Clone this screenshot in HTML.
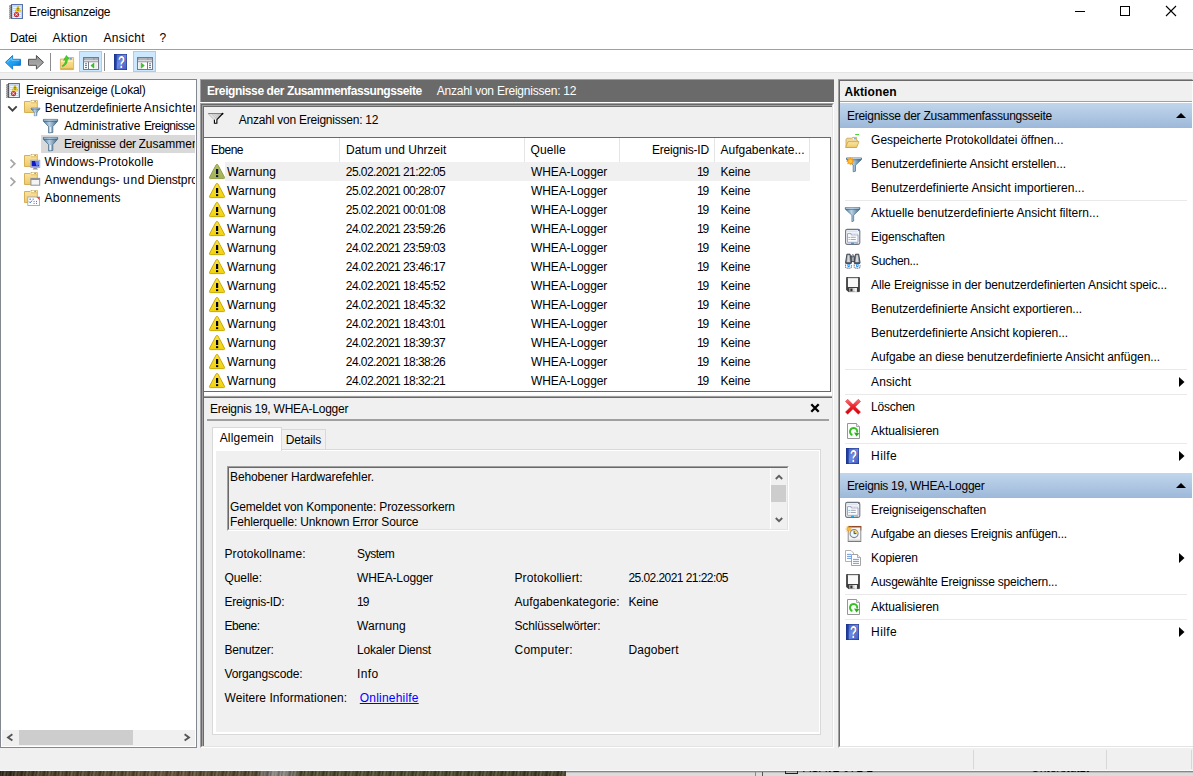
<!DOCTYPE html>
<html lang="de"><head><meta charset="utf-8"><title>Ereignisanzeige</title>
<style>
html,body{margin:0;padding:0;background:#f0f0f0;}
body{width:1193px;height:776px;overflow:hidden;position:relative;font-family:"Liberation Sans",sans-serif;font-size:12px;color:#000;}
#app{position:absolute;left:0;top:0;width:1193px;height:776px;overflow:hidden;}
#app>div,#app>svg,#app>span{position:absolute;box-sizing:border-box;}
.t{white-space:pre;line-height:16px;height:16px;}

</style></head>
<body>
<div id="app">
<svg width="0" height="0" style="left:0;top:0"><defs><linearGradient id="gfold" x1="0" y1="0" x2="0" y2="1"><stop offset="0" stop-color="#fbe6a3"/><stop offset="1" stop-color="#efc968"/></linearGradient><linearGradient id="gfun" x1="0" y1="0" x2="1" y2="0"><stop offset="0" stop-color="#4f7c9f"/><stop offset=".42" stop-color="#b9d2e4"/><stop offset="1" stop-color="#3f6788"/></linearGradient><linearGradient id="gwarn" x1="0" y1="0" x2="0" y2="1"><stop offset="0" stop-color="#f6e048"/><stop offset="1" stop-color="#f2d20c"/></linearGradient><linearGradient id="gwarns" x1="0" y1="0" x2="0" y2="1"><stop offset="0" stop-color="#b4c06c"/><stop offset="1" stop-color="#a3b052"/></linearGradient><linearGradient id="ghelp" x1="0" y1="0" x2="1" y2="1"><stop offset="0" stop-color="#3355c8"/><stop offset=".5" stop-color="#6d8ae2"/><stop offset="1" stop-color="#3a58c0"/></linearGradient><linearGradient id="gback" x1="0" y1="0" x2="1" y2="1"><stop offset="0" stop-color="#3fb4f4"/><stop offset=".6" stop-color="#1a9bee"/><stop offset="1" stop-color="#0660c0"/></linearGradient><linearGradient id="gfwd" x1="0" y1="0" x2="0" y2="1"><stop offset="0" stop-color="#8a8a8a"/><stop offset="1" stop-color="#b8b8b8"/></linearGradient><linearGradient id="gred" x1="0" y1="0" x2="0" y2="1"><stop offset="0" stop-color="#f47478"/><stop offset=".5" stop-color="#ee2028"/><stop offset="1" stop-color="#cc0008"/></linearGradient></defs></svg>
<div style="left:0px;top:0px;width:1193px;height:49px;background:#fff"></div>
<div style="left:0px;top:49px;width:1193px;height:1px;background:#a0a0a0"></div>
<div style="left:0px;top:50px;width:1193px;height:22px;background:#fff"></div>
<div style="left:0px;top:72px;width:1193px;height:1px;background:#e4e4e4"></div>
<div style="left:0px;top:771px;width:566px;height:5px;background:repeating-linear-gradient(100deg,rgba(0,0,0,.28) 0,rgba(255,240,200,.12) 2px,rgba(0,0,0,.18) 3px,rgba(255,240,200,.2) 5px,rgba(0,0,0,.05) 7px,rgba(255,240,200,.1) 8px,rgba(0,0,0,.28) 11px),linear-gradient(90deg,#2a2418 0,#4a3e28 7%,#5e4e34 30%,#51472f 45%,#6f6d66 46.8%,#908f8b 49%,#77766f 51.5%,#4b4a2e 53%,#46472b 80%,#3f3d28 100%)"></div>
<div style="left:566px;top:771px;width:627px;height:5px;background:#dcdcdc"></div>
<div style="left:566px;top:771px;width:627px;height:2px;background:linear-gradient(#6a6a6a,#dcdcdc)"></div>
<div style="left:755px;top:772px;width:1px;height:4px;background:#8a8a8a"></div>
<div style="left:762px;top:772px;width:1px;height:4px;background:#555"></div>
<div style="left:785px;top:771px;width:13px;height:3px;border:1px solid #222;border-top:none"></div>
<div style="left:800px;top:771px;width:100px;height:3px;overflow:hidden"><span style="position:absolute;left:3px;top:-10px;white-space:pre;line-height:14px">ASAv2 071 1</span></div>
<div style="left:1025px;top:771px;width:100px;height:3px;overflow:hidden"><span style="position:absolute;left:6px;top:-10px;white-space:pre;line-height:14px">Unterstützt</span></div>
<div style="left:0px;top:770px;width:1193px;height:1px;background:#fafafa"></div>
<svg style="left:8px;top:4px;overflow:visible" width="16" height="16" viewBox="0 0 16 16"><rect x="3.5" y="0.5" width="11" height="14" fill="#c6daf2" stroke="#5a72ac"/><path d="M5 3.5H13M5 5.5H13M5 7.5H13M5 9.5H13M5 11.5H13M5 13.5H13" stroke="#f4f8fd" stroke-width="0.9"/><path d="M1.2 2.3L4 1.6M1.2 4.3L4 3.6M1.2 6.3L4 5.6M1.2 8.3L4 7.6M1.2 10.3L4 9.6M1.2 12.3L4 11.6M1.2 14.2L4 13.5" stroke="#4c4c4c" stroke-width="1.15"/><path d="M10 2L12.9 7.3H7.1Z" fill="#f2d21a" stroke="#d6b000" stroke-width="0.6" stroke-linejoin="round"/><path d="M10 3.8V5.6M10 6.2V6.9" stroke="#3a3000" stroke-width="0.9"/><circle cx="8.5" cy="10.6" r="2.6" fill="#cc262c"/><circle cx="8.1" cy="10" r="1.5" fill="#e0565a"/><path d="M7.5 9.6L9.5 11.6M9.5 9.6L7.5 11.6" stroke="#fff" stroke-width=".9"/></svg>
<div style="left:1075px;top:11px;width:10px;height:1px;background:#000"></div>
<div style="left:1120px;top:6px;width:10px;height:10px;border:1px solid #000"></div>
<svg style="left:1165px;top:5px" width="12" height="12" viewBox="0 0 12 12"><path d="M1 1L11 11M11 1L1 11" stroke="#000" stroke-width="1.1" fill="none"/></svg>
<svg style="left:5px;top:54px;overflow:visible" width="16" height="16" viewBox="0 0 16 16"><path d="M0.5 8.3L7.6 1.5V5.3H15.5V11.3H7.6V15.1Z" fill="url(#gback)" stroke="#1a7ed2" stroke-width="1" stroke-linejoin="round"/><path d="M2.2 8.2L6.8 3.8V6.3H14.4" stroke="#8ad6ff" stroke-width=".9" fill="none" opacity=".85"/></svg>
<svg style="left:28px;top:54px;overflow:visible" width="16" height="16" viewBox="0 0 16 16"><path d="M15.5 8.3L8.4 1.5V5.3H0.5V11.3H8.4V15.1Z" fill="url(#gfwd)" stroke="#505050" stroke-width="1" stroke-linejoin="round"/><path d="M1.6 6.4H9.2V4" stroke="#a8a8a8" stroke-width=".8" fill="none" opacity=".7"/></svg>
<div style="left:50px;top:53px;width:1px;height:18px;background:#8d8d8d"></div>
<svg style="left:59px;top:54px;overflow:visible" width="16" height="16" viewBox="0 0 16 16"><path d="M1.4 5H5.2L6.4 3.5H14.6V15.6H1.4Z" fill="url(#gfold)" stroke="#d3ad55" stroke-width=".8"/><rect x="10.3" y="4.3" width="2.8" height="1.3" rx=".6" fill="#4a8be0"/><rect x="9.4" y="4.2" width="1" height="1.4" fill="#fff"/><path d="M2 7.2H14" stroke="#fdf3d0" stroke-width="1.2"/><path d="M2 14.9H14" stroke="#c79a3c" stroke-width=".8"/><path d="M3 11.8C5.2 10.8 6.4 8.8 6.6 5.8L4.6 6.4 7.4 1.4 10.2 5 8.4 5.2C8.6 9 6.6 11.6 3.6 12.6Z" fill="#44d030" stroke="#2aa51c" stroke-width="0.5"/></svg>
<div style="left:79px;top:51px;width:23px;height:21px;background:#cce8ff;border:1px solid #99d1ff"></div>
<svg style="left:83px;top:57px;overflow:visible" width="16" height="13" viewBox="0 0 16 13"><rect x="0.5" y="0.5" width="15" height="12" fill="#fff" stroke="#767a86"/><rect x="1" y="1" width="14" height="2" fill="#8c909c"/><path d="M1.5 2H10.5" stroke="#e8e8ee" stroke-width=".8"/><rect x="11.6" y="1.5" width="1" height="1" fill="#fff"/><rect x="13.5" y="1.5" width="1" height="1" fill="#fff"/><path d="M1 3.8H15" stroke="#c9ccd4" stroke-width="1"/><path d="M1 4.8H15" stroke="#767a86" stroke-width=".8"/><rect x="5" y="4.8" width="1" height="7.5" fill="#767a86"/><path d="M2 6.8H4M2 8.6H4M2 10.6H4" stroke="#3b79c8" stroke-width="1"/><rect x="12.2" y="5.6" width="2.3" height="6.4" fill="#ececec"/><path d="M11 6L7.8 8.6 11 11.2Z" fill="#3cc42a" stroke="#2aa41c" stroke-width=".5"/></svg>
<div style="left:104px;top:53px;width:1px;height:18px;background:#8d8d8d"></div>
<svg style="left:114px;top:54px;overflow:visible" width="13" height="16" viewBox="0 0 13 16"><rect x="0" y="0" width="13" height="16" fill="url(#ghelp)"/><rect x="0" y="0" width="2.7" height="16" fill="#21409e"/><rect x="0.25" y="0.25" width="12.5" height="15.5" fill="none" stroke="#1a2c84" stroke-width=".5"/><text transform="translate(8,14.2) scale(.72,1)" font-family="Liberation Sans,sans-serif" font-size="16" font-weight="700" fill="#1a2a78" text-anchor="middle">?</text><text transform="translate(7.4,13.7) scale(.72,1)" font-family="Liberation Sans,sans-serif" font-size="16" font-weight="700" fill="#fff" text-anchor="middle">?</text></svg>
<div style="left:133px;top:51px;width:23px;height:21px;background:#cce8ff;border:1px solid #99d1ff"></div>
<svg style="left:137px;top:57px;overflow:visible" width="16" height="13" viewBox="0 0 16 13"><rect x="0.5" y="0.5" width="15" height="12" fill="#fff" stroke="#767a86"/><rect x="1" y="1" width="14" height="2" fill="#8c909c"/><path d="M1.5 2H10.5" stroke="#e8e8ee" stroke-width=".8"/><rect x="11.6" y="1.5" width="1" height="1" fill="#fff"/><rect x="13.5" y="1.5" width="1" height="1" fill="#fff"/><path d="M1 3.8H15" stroke="#c9ccd4" stroke-width="1"/><path d="M1 4.8H15" stroke="#767a86" stroke-width=".8"/><rect x="10" y="4.8" width="1" height="7.5" fill="#767a86"/><path d="M12 6.8H14M12 8.6H14M12 10.6H14" stroke="#3b79c8" stroke-width="1"/><rect x="1.4" y="5.6" width="2.3" height="6.4" fill="#ececec"/><path d="M4.2 6L7.4 8.6 4.2 11.2Z" fill="#3cc42a" stroke="#2aa41c" stroke-width=".5"/></svg>
<div style="left:0px;top:79px;width:197px;height:669px;background:#fff;border:1px solid #828790"></div>
<div style="left:41px;top:135px;width:154px;height:18px;background:#d9d9d9"></div>
<svg style="left:5px;top:83px;overflow:visible" width="16" height="16" viewBox="0 0 16 16"><rect x="3.5" y="0.5" width="11" height="14" fill="#c6daf2" stroke="#5a72ac"/><path d="M5 3.5H13M5 5.5H13M5 7.5H13M5 9.5H13M5 11.5H13M5 13.5H13" stroke="#f4f8fd" stroke-width="0.9"/><path d="M1.2 2.3L4 1.6M1.2 4.3L4 3.6M1.2 6.3L4 5.6M1.2 8.3L4 7.6M1.2 10.3L4 9.6M1.2 12.3L4 11.6M1.2 14.2L4 13.5" stroke="#4c4c4c" stroke-width="1.15"/><path d="M10 2L12.9 7.3H7.1Z" fill="#f2d21a" stroke="#d6b000" stroke-width="0.6" stroke-linejoin="round"/><path d="M10 3.8V5.6M10 6.2V6.9" stroke="#3a3000" stroke-width="0.9"/><circle cx="8.5" cy="10.6" r="2.6" fill="#cc262c"/><circle cx="8.1" cy="10" r="1.5" fill="#e0565a"/><path d="M7.5 9.6L9.5 11.6M9.5 9.6L7.5 11.6" stroke="#fff" stroke-width=".9"/></svg>
<svg style="left:7px;top:103px;overflow:visible" width="16" height="16" viewBox="0 0 16 16"><path d="M1.3 3.4L5.5 7.6L9.7 3.4" stroke="#404040" stroke-width="1.9" fill="none"/></svg>
<svg style="left:24px;top:99px;overflow:visible" width="16" height="16" viewBox="0 0 16 16"><path d="M0.5 2.5H6L7 1.5H13.3V13.5H0.5Z" fill="url(#gfold)" stroke="#d5b057" stroke-width="1"/><rect x="8" y="1.6" width="4.6" height="1.6" fill="#fff"/><rect x="10.2" y="1.7" width="2" height="1.1" rx=".5" fill="#4a8be0"/><path d="M7 3.8H13" stroke="#d9b55e" stroke-width=".8"/><g transform="translate(6.75,8.2) scale(0.63,0.58)"><path d="M0.4 1.4H14.6V3.2L9.8 8.6V14.5L5.6 14.9V8.6L0.4 3.2Z" fill="url(#gfun)" stroke="#456a8a" stroke-width=".8" stroke-linejoin="round"/><path d="M1 2.2H14" stroke="#c5d9e8" stroke-width=".9"/><path d="M0.8 3.3H14.2" stroke="#3f6383" stroke-width=".8"/><path d="M7.4 9V14.2" stroke="#e6f0f7" stroke-width="1.3"/></g></svg>
<svg style="left:43px;top:118px;overflow:visible" width="16" height="16" viewBox="0 0 16 16"><g transform="translate(0,0) scale(1,1)"><path d="M0.4 1.4H14.6V3.2L9.8 8.6V14.5L5.6 14.9V8.6L0.4 3.2Z" fill="url(#gfun)" stroke="#456a8a" stroke-width=".8" stroke-linejoin="round"/><path d="M1 2.2H14" stroke="#c5d9e8" stroke-width=".9"/><path d="M0.8 3.3H14.2" stroke="#3f6383" stroke-width=".8"/><path d="M7.4 9V14.2" stroke="#e6f0f7" stroke-width="1.3"/></g></svg>
<svg style="left:43px;top:136px;overflow:visible" width="16" height="16" viewBox="0 0 16 16"><g transform="translate(0,0) scale(1,1)"><path d="M0.4 1.4H14.6V3.2L9.8 8.6V14.5L5.6 14.9V8.6L0.4 3.2Z" fill="url(#gfun)" stroke="#456a8a" stroke-width=".8" stroke-linejoin="round"/><path d="M1 2.2H14" stroke="#c5d9e8" stroke-width=".9"/><path d="M0.8 3.3H14.2" stroke="#3f6383" stroke-width=".8"/><path d="M7.4 9V14.2" stroke="#e6f0f7" stroke-width="1.3"/></g></svg>
<svg style="left:7px;top:156px;overflow:visible" width="16" height="16" viewBox="0 0 16 16"><path d="M3.5 3.6L7.8 7.8L3.5 12" stroke="#a6a6a6" stroke-width="1.7" fill="none"/></svg>
<svg style="left:24px;top:153px;overflow:visible" width="16" height="16" viewBox="0 0 16 16"><path d="M0.5 2.5H6L7 1.5H13.3V13.5H0.5Z" fill="url(#gfold)" stroke="#d5b057" stroke-width="1"/><rect x="8" y="1.6" width="4.6" height="1.6" fill="#fff"/><rect x="10.2" y="1.7" width="2" height="1.1" rx=".5" fill="#4a8be0"/><path d="M7 3.8H13" stroke="#d9b55e" stroke-width=".8"/><rect x="6.8" y="7.2" width="9" height="7.2" fill="#d8dde6" stroke="#9aa0aa" stroke-width=".8"/><rect x="7.6" y="8" width="7.4" height="5.4" fill="#1018c8"/><path d="M11 8H15V11.8L12.6 13.4Z" fill="#6a86ee"/><path d="M8.6 16.4L9.8 14.8H12.8L14 16.4Z" fill="#8a8f98"/></svg>
<svg style="left:7px;top:174px;overflow:visible" width="16" height="16" viewBox="0 0 16 16"><path d="M3.5 3.6L7.8 7.8L3.5 12" stroke="#a6a6a6" stroke-width="1.7" fill="none"/></svg>
<svg style="left:24px;top:171px;overflow:visible" width="16" height="16" viewBox="0 0 16 16"><path d="M0.5 2.5H6L7 1.5H13.3V13.5H0.5Z" fill="url(#gfold)" stroke="#d5b057" stroke-width="1"/><rect x="8" y="1.6" width="4.6" height="1.6" fill="#fff"/><rect x="10.2" y="1.7" width="2" height="1.1" rx=".5" fill="#4a8be0"/><path d="M7 3.8H13" stroke="#d9b55e" stroke-width=".8"/><rect x="6.9" y="7.4" width="8.8" height="6.8" fill="#f4f4f4" stroke="#8d9098" stroke-width="1"/><rect x="6.9" y="7.4" width="8.8" height="1.6" fill="#8d9098"/></svg>
<svg style="left:24px;top:189px;overflow:visible" width="16" height="16" viewBox="0 0 16 16"><path d="M0.5 2.5H6L7 1.5H13.3V13.5H0.5Z" fill="url(#gfold)" stroke="#d5b057" stroke-width="1"/><rect x="8" y="1.6" width="4.6" height="1.6" fill="#fff"/><rect x="10.2" y="1.7" width="2" height="1.1" rx=".5" fill="#4a8be0"/><path d="M7 3.8H13" stroke="#d9b55e" stroke-width=".8"/><rect x="3.8" y="8" width="11.8" height="8.4" fill="#fff" stroke="#9a9da6" stroke-width=".8"/><path d="M12.4 8H15.6V11.2Z" fill="#f04a4a"/><path d="M5.4 10.2H7M8.6 10.2H9.8M5.2 12.6L6.2 13.8 8 11.6M9.6 12.4H10.6M12 12.4H13M9.6 14.4H10.6M12 14.4H13" stroke="#2a62c8" stroke-width=".9" fill="none"/></svg>
<div style="left:2px;top:730px;width:193px;height:16px;background:#f0f0f0"></div>
<div style="left:19px;top:730px;width:114px;height:15px;background:#cdcdcd"></div>
<svg style="left:6px;top:733px" width="8" height="9" viewBox="0 0 8 9"><path d="M6.4 1.2L2 4.4L6.4 7.6" stroke="#555" stroke-width="1.9" fill="none"/></svg>
<svg style="left:183px;top:733px" width="8" height="9" viewBox="0 0 8 9"><path d="M1.6 1.2L6 4.4L1.6 7.6" stroke="#555" stroke-width="1.9" fill="none"/></svg>
<div style="left:200px;top:79px;width:634px;height:23px;background:#6a6a6a;border-top:1px solid #a0a0a0;border-left:1px solid #a0a0a0"></div>
<div style="left:200px;top:102px;width:634px;height:1px;background:#fff"></div>
<div style="left:200px;top:103px;width:634px;height:645px;background:#f0f0f0;border-left:1px solid #a0a0a0;border-top:1px solid #a0a0a0;border-right:1px solid #fff;border-bottom:1px solid #fff"></div>
<div style="left:201px;top:104px;width:632px;height:643px;border-left:1px solid #696969;border-top:1px solid #696969;border-right:1px solid #e3e3e3;border-bottom:1px solid #e3e3e3"></div>
<div style="left:202px;top:105px;width:630px;height:641px;border-left:1px solid #a0a0a0;border-top:1px solid #a0a0a0"></div>
<div style="left:203px;top:106px;width:629px;height:640px;border-left:1px solid #696969;border-top:1px solid #696969"></div>
<svg style="left:208px;top:112px;overflow:visible" width="16" height="13" viewBox="0 0 16 13"><path d="M1.4 1.8L6.6 7.4H8.8L14 1.8Z" fill="#c4c4c4"/><path d="M3.4 2.4L7.2 6.6M5.4 2.2L8.2 5.4M7.6 2.2L9.6 4.4" stroke="#ececec" stroke-width=".7"/><path d="M0.2 1.5H14.4" stroke="#808080" stroke-width="1"/><path d="M0.4 1.7L6.3 7.7" stroke="#8c8c8c" stroke-width=".9"/><path d="M1.6 2.1L6.9 7.4" stroke="#fff" stroke-width=".8"/><rect x="6.9" y="7.6" width="1.5" height="3.3" fill="#fff"/><path d="M14.7 1.5L8.9 7.7V11.3H6.4V7.7" stroke="#000" stroke-width="1.1" fill="none"/><circle cx="14.6" cy="1.6" r=".9" fill="#000"/></svg>
<div style="left:204px;top:137px;width:627px;height:255px;background:#fff;border-bottom:1px solid #696969;border-right:1px solid #696969"></div>
<div style="left:204px;top:137px;width:627px;height:1px;background:#696969"></div>
<div style="left:225px;top:162px;width:585px;height:19px;background:#f0f0f0"></div>
<div style="left:339px;top:138px;width:1px;height:24px;background:#e5e5e5"></div>
<div style="left:524px;top:138px;width:1px;height:24px;background:#e5e5e5"></div>
<div style="left:619px;top:138px;width:1px;height:24px;background:#e5e5e5"></div>
<div style="left:714px;top:138px;width:1px;height:24px;background:#e5e5e5"></div>
<div style="left:809px;top:138px;width:1px;height:24px;background:#e5e5e5"></div>
<svg style="left:209px;top:164px;overflow:visible" width="16" height="16" viewBox="0 0 16 16"><path d="M8 0.3Q8.6 0.3 9 1.1L15.5 13.3Q15.9 14.5 14.8 14.6H1.2Q0.1 14.5 0.5 13.3L7 1.1Q7.4 0.3 8 0.3Z" fill="url(#gwarns)" stroke="#94a046" stroke-width="1"/><path d="M7 5H9.2V10H7Z" fill="#00103c"/><rect x="7" y="11.2" width="2.2" height="1.9" fill="#00103c"/></svg>
<svg style="left:209px;top:183px;overflow:visible" width="16" height="16" viewBox="0 0 16 16"><path d="M8 0.3Q8.6 0.3 9 1.1L15.5 13.3Q15.9 14.5 14.8 14.6H1.2Q0.1 14.5 0.5 13.3L7 1.1Q7.4 0.3 8 0.3Z" fill="url(#gwarn)" stroke="#c9aa00" stroke-width="1"/><path d="M7 5H9.2V10H7Z" fill="#000"/><rect x="7" y="11.2" width="2.2" height="1.9" fill="#000"/></svg>
<svg style="left:209px;top:202px;overflow:visible" width="16" height="16" viewBox="0 0 16 16"><path d="M8 0.3Q8.6 0.3 9 1.1L15.5 13.3Q15.9 14.5 14.8 14.6H1.2Q0.1 14.5 0.5 13.3L7 1.1Q7.4 0.3 8 0.3Z" fill="url(#gwarn)" stroke="#c9aa00" stroke-width="1"/><path d="M7 5H9.2V10H7Z" fill="#000"/><rect x="7" y="11.2" width="2.2" height="1.9" fill="#000"/></svg>
<svg style="left:209px;top:221px;overflow:visible" width="16" height="16" viewBox="0 0 16 16"><path d="M8 0.3Q8.6 0.3 9 1.1L15.5 13.3Q15.9 14.5 14.8 14.6H1.2Q0.1 14.5 0.5 13.3L7 1.1Q7.4 0.3 8 0.3Z" fill="url(#gwarn)" stroke="#c9aa00" stroke-width="1"/><path d="M7 5H9.2V10H7Z" fill="#000"/><rect x="7" y="11.2" width="2.2" height="1.9" fill="#000"/></svg>
<svg style="left:209px;top:240px;overflow:visible" width="16" height="16" viewBox="0 0 16 16"><path d="M8 0.3Q8.6 0.3 9 1.1L15.5 13.3Q15.9 14.5 14.8 14.6H1.2Q0.1 14.5 0.5 13.3L7 1.1Q7.4 0.3 8 0.3Z" fill="url(#gwarn)" stroke="#c9aa00" stroke-width="1"/><path d="M7 5H9.2V10H7Z" fill="#000"/><rect x="7" y="11.2" width="2.2" height="1.9" fill="#000"/></svg>
<svg style="left:209px;top:259px;overflow:visible" width="16" height="16" viewBox="0 0 16 16"><path d="M8 0.3Q8.6 0.3 9 1.1L15.5 13.3Q15.9 14.5 14.8 14.6H1.2Q0.1 14.5 0.5 13.3L7 1.1Q7.4 0.3 8 0.3Z" fill="url(#gwarn)" stroke="#c9aa00" stroke-width="1"/><path d="M7 5H9.2V10H7Z" fill="#000"/><rect x="7" y="11.2" width="2.2" height="1.9" fill="#000"/></svg>
<svg style="left:209px;top:278px;overflow:visible" width="16" height="16" viewBox="0 0 16 16"><path d="M8 0.3Q8.6 0.3 9 1.1L15.5 13.3Q15.9 14.5 14.8 14.6H1.2Q0.1 14.5 0.5 13.3L7 1.1Q7.4 0.3 8 0.3Z" fill="url(#gwarn)" stroke="#c9aa00" stroke-width="1"/><path d="M7 5H9.2V10H7Z" fill="#000"/><rect x="7" y="11.2" width="2.2" height="1.9" fill="#000"/></svg>
<svg style="left:209px;top:297px;overflow:visible" width="16" height="16" viewBox="0 0 16 16"><path d="M8 0.3Q8.6 0.3 9 1.1L15.5 13.3Q15.9 14.5 14.8 14.6H1.2Q0.1 14.5 0.5 13.3L7 1.1Q7.4 0.3 8 0.3Z" fill="url(#gwarn)" stroke="#c9aa00" stroke-width="1"/><path d="M7 5H9.2V10H7Z" fill="#000"/><rect x="7" y="11.2" width="2.2" height="1.9" fill="#000"/></svg>
<svg style="left:209px;top:316px;overflow:visible" width="16" height="16" viewBox="0 0 16 16"><path d="M8 0.3Q8.6 0.3 9 1.1L15.5 13.3Q15.9 14.5 14.8 14.6H1.2Q0.1 14.5 0.5 13.3L7 1.1Q7.4 0.3 8 0.3Z" fill="url(#gwarn)" stroke="#c9aa00" stroke-width="1"/><path d="M7 5H9.2V10H7Z" fill="#000"/><rect x="7" y="11.2" width="2.2" height="1.9" fill="#000"/></svg>
<svg style="left:209px;top:335px;overflow:visible" width="16" height="16" viewBox="0 0 16 16"><path d="M8 0.3Q8.6 0.3 9 1.1L15.5 13.3Q15.9 14.5 14.8 14.6H1.2Q0.1 14.5 0.5 13.3L7 1.1Q7.4 0.3 8 0.3Z" fill="url(#gwarn)" stroke="#c9aa00" stroke-width="1"/><path d="M7 5H9.2V10H7Z" fill="#000"/><rect x="7" y="11.2" width="2.2" height="1.9" fill="#000"/></svg>
<svg style="left:209px;top:354px;overflow:visible" width="16" height="16" viewBox="0 0 16 16"><path d="M8 0.3Q8.6 0.3 9 1.1L15.5 13.3Q15.9 14.5 14.8 14.6H1.2Q0.1 14.5 0.5 13.3L7 1.1Q7.4 0.3 8 0.3Z" fill="url(#gwarn)" stroke="#c9aa00" stroke-width="1"/><path d="M7 5H9.2V10H7Z" fill="#000"/><rect x="7" y="11.2" width="2.2" height="1.9" fill="#000"/></svg>
<svg style="left:209px;top:373px;overflow:visible" width="16" height="16" viewBox="0 0 16 16"><path d="M8 0.3Q8.6 0.3 9 1.1L15.5 13.3Q15.9 14.5 14.8 14.6H1.2Q0.1 14.5 0.5 13.3L7 1.1Q7.4 0.3 8 0.3Z" fill="url(#gwarn)" stroke="#c9aa00" stroke-width="1"/><path d="M7 5H9.2V10H7Z" fill="#000"/><rect x="7" y="11.2" width="2.2" height="1.9" fill="#000"/></svg>
<div style="left:204px;top:392px;width:628px;height:4px;background:#fff"></div>
<div style="left:204px;top:395px;width:628px;height:1px;background:#f4f4f4"></div>
<div style="left:204px;top:396px;width:628px;height:1px;background:#a0a0a0"></div>
<div style="left:204px;top:397px;width:628px;height:1px;background:#696969"></div>
<svg style="left:810px;top:403px" width="10" height="10" viewBox="0 0 10 10"><path d="M1.3 1.3L8.7 8.7M8.7 1.3L1.3 8.7" stroke="#000" stroke-width="2.3" fill="none"/></svg>
<div style="left:207px;top:419px;width:622px;height:2px;background:#a0a0a0"></div>
<div style="left:212px;top:449px;width:609px;height:286px;background:#fff;border:1px solid #d9d9d9"></div>
<div style="left:216px;top:451px;width:603px;height:281px;background:#f0f0f0"></div>
<div style="left:212px;top:427px;width:70px;height:24px;background:#fff;border:1px solid #d9d9d9;border-bottom:none"></div>
<div style="left:281px;top:429px;width:45px;height:21px;background:#f0f0f0;border:1px solid #d9d9d9"></div>
<div style="left:227px;top:466px;width:562px;height:65px;background:#f0f0f0;border-left:1px solid #a0a0a0;border-top:1px solid #a0a0a0;border-right:1px solid #fff;border-bottom:1px solid #fff"></div>
<div style="left:228px;top:467px;width:560px;height:63px;border-left:1px solid #696969;border-top:1px solid #696969;border-right:1px solid #e3e3e3;border-bottom:1px solid #e3e3e3"></div>
<div style="left:770px;top:468px;width:1px;height:61px;background:#fff"></div>
<div style="left:771px;top:485px;width:15px;height:17px;background:#cdcdcd"></div>
<svg style="left:774px;top:473px" width="10" height="8" viewBox="0 0 10 8"><path d="M1.8 6L5 2.8L8.2 6" stroke="#606060" stroke-width="1.9" fill="none"/></svg>
<svg style="left:774px;top:516px" width="10" height="8" viewBox="0 0 10 8"><path d="M1.8 2L5 5.2L8.2 2" stroke="#606060" stroke-width="1.9" fill="none"/></svg>
<div style="left:838px;top:79px;width:355px;height:669px;background:#fff;border-left:1px solid #a0a0a0;border-top:1px solid #a0a0a0;border-bottom:1px solid #fff;border-right:1px solid #fbfbfb"></div>
<div style="left:839px;top:80px;width:354px;height:667px;border-left:1px solid #696969;border-top:1px solid #696969;border-bottom:1px solid #e3e3e3"></div>
<div style="left:840px;top:81px;width:352px;height:20px;background:#f0f0f0"></div>
<div style="left:840px;top:101px;width:352px;height:1px;background:#a0a0a0"></div>
<div style="left:840px;top:103px;width:352px;height:25px;background:linear-gradient(#c1d6ec,#9cb8d9)"></div>
<svg style="left:1176px;top:113px" width="10" height="5" viewBox="0 0 10 5"><path d="M0 5L5 0L10 5Z" fill="#000"/></svg>
<svg style="left:845px;top:134px;overflow:visible" width="16" height="16" viewBox="0 0 16 16"><path d="M1 5.2L2 4.2H6.6L7.6 3.4H11.6V6.4H12.6L11.4 13.4H1Z" fill="#f2d995" stroke="#c6a24e" stroke-width=".8"/><rect x="8.2" y="4" width="2.8" height="1.5" fill="#fff"/><rect x="9" y="4.2" width="2" height="1.1" rx=".5" fill="#3b8be6"/><path d="M3 7.6H14L11.6 13.5H0.6Z" fill="url(#gfold)" stroke="#c6a24e" stroke-width=".8" stroke-linejoin="round"/><path d="M10.2 0.6H14" stroke="#38d020" stroke-width="1"/></svg>
<svg style="left:845.5px;top:157px;overflow:visible" width="16" height="16" viewBox="0 0 16 16"><path d="M0.5 0.9H15.5V2.6L9.5 8.2V14.2L7.2 14.8V8.2L0.5 2.6Z" fill="url(#gfun)" stroke="#456a8a" stroke-width=".7" stroke-linejoin="round"/><path d="M1 1.6H15" stroke="#cfe0ec" stroke-width=".8"/><path d="M1 2.8H15" stroke="#446888" stroke-width=".7"/><path d="M4.3 0.3L5.3 1.9L7.1 1.4L6.6 3.2L8.2 4.2L6.6 5.2L7.1 7.0L5.3 6.5L4.3 8.1L3.3 6.5L1.5 7.0L2.0 5.2L0.4 4.2L2.0 3.2L1.5 1.4L3.3 1.9Z" fill="#ffa014" stroke="#f28c00" stroke-width=".3"/><circle cx="4.3" cy="4.2" r="1.7" fill="#ffc83c"/></svg>
<div style="left:845px;top:200px;width:342px;height:1px;background:#e9e9e9"></div>
<svg style="left:845px;top:206px;overflow:visible" width="16" height="16" viewBox="0 0 16 16"><path d="M0.3 1.6H14.9V3.2L8.7 9.2V15L6.9 15.8V9.2L0.3 3.2Z" fill="url(#gfun)" stroke="#4c7191" stroke-width=".7" stroke-linejoin="round"/><path d="M1 2.3H14.2" stroke="#c9dcea" stroke-width=".9"/><path d="M0.8 3.4H14.4" stroke="#446888" stroke-width=".7"/></svg>
<svg style="left:845px;top:229px;overflow:visible" width="16" height="16" viewBox="0 0 16 16"><rect x="0.6" y="0.4" width="14.2" height="15" rx="1.6" fill="#f1f5fa" stroke="#70747e" stroke-width="1.1"/><path d="M2 2.2H12.6" stroke="#d3dbe7" stroke-width="1"/><path d="M12.8 0.8L14.2 2.2" stroke="#4f74a8" stroke-width=".9"/><path d="M2.5 4.6H6.2V5.9H13V13.3H2.5Z" fill="#fbfcfe" stroke="#9a9ec0" stroke-width=".9"/><rect x="7.2" y="4.3" width="2.1" height="1.1" rx=".4" fill="#fff" stroke="#c4c8dc" stroke-width=".4"/><rect x="10.1" y="4.3" width="2.1" height="1.1" rx=".4" fill="#fff" stroke="#c4c8dc" stroke-width=".4"/><path d="M5.6 8.3H10.8M5.6 10.5H10.8" stroke="#9a9ea8" stroke-width=".9"/><circle cx="4.1" cy="8.3" r=".65" fill="#10a8f4"/><circle cx="4.1" cy="10.5" r=".55" fill="#8a8e98"/><rect x="6" y="13.7" width="3.1" height="1.4" fill="#14b0f4"/><rect x="10.3" y="13.9" width="2.7" height="1" fill="#b4b4b4"/></svg>
<svg style="left:845px;top:252.5px;overflow:visible" width="16" height="16" viewBox="0 0 16 16"><path d="M1.9000000000000001 1.2H5.1L6.5 9.8H0.5Z" fill="#8a9098" stroke="#343a46" stroke-width=".9" stroke-linejoin="round"/><path d="M2.6999999999999997 2.2H4.3L4.8999999999999995 9.2H2.1Z" fill="#d6dadc"/><rect x="0.5" y="9.6" width="6" height="1.5" fill="#4a5162"/><path d="M0.6 11.6V14.6Q3.5 16 6.3999999999999995 14.6V11.6" fill="#fff" stroke="#2c3240" stroke-width=".8" stroke-dasharray="1.3 .7"/><path d="M2.1 11.2H5.3L4.7 13.8 2.9 14.6Z" fill="#1e8cf4"/><circle cx="3.9" cy="12.4" r=".7" fill="#bfe2ff"/><path d="M10.5 1.2H13.7L15.100000000000001 9.8H9.1Z" fill="#8a9098" stroke="#343a46" stroke-width=".9" stroke-linejoin="round"/><path d="M11.3 2.2H12.9L13.5 9.2H10.700000000000001Z" fill="#d6dadc"/><rect x="9.1" y="9.6" width="6" height="1.5" fill="#4a5162"/><path d="M9.200000000000001 11.6V14.6Q12.100000000000001 16 15.0 14.6V11.6" fill="#fff" stroke="#2c3240" stroke-width=".8" stroke-dasharray="1.3 .7"/><path d="M10.700000000000001 11.2H13.9L13.3 13.8 11.5 14.6Z" fill="#1e8cf4"/><circle cx="12.5" cy="12.4" r=".7" fill="#bfe2ff"/><rect x="6.3" y="3.6" width="3" height="5" fill="#a6aab0" stroke="#343a46" stroke-width=".8"/><circle cx="7.8" cy="2.8" r="1.1" fill="#e0e3e5" stroke="#343a46" stroke-width=".7"/></svg>
<svg style="left:846px;top:277px;overflow:visible" width="16" height="16" viewBox="0 0 16 16"><path d="M0.6 0.5H13.4V14.6H2.3L0.6 12.9Z" fill="#3e3e3e" stroke="#1c1c1c" stroke-width=".7"/><rect x="1.9" y="0.9" width="10.2" height="9.1" fill="#f9f9f9"/><rect x="1.9" y="0.9" width="10.2" height="1.1" fill="#dedede"/><rect x="3.4" y="11" width="7.4" height="3.7" fill="#d4d4d4"/><rect x="4.3" y="11.5" width="2.2" height="2.8" fill="#2e2e2e"/><rect x="8.6" y="11" width="2.2" height="3.7" fill="#f2f2f2"/></svg>
<div style="left:845px;top:369px;width:342px;height:1px;background:#e9e9e9"></div>
<svg style="left:1179px;top:376.5px" width="6" height="10" viewBox="0 0 6 10"><path d="M0 0L5.5 5L0 10Z" fill="#000"/></svg>
<div style="left:845px;top:394px;width:342px;height:1px;background:#e9e9e9"></div>
<svg style="left:845px;top:399px;overflow:visible" width="16" height="16" viewBox="0 0 16 16"><path d="M13.30 15.37L15.57 13.10L2.70 0.23L0.43 2.50ZM15.57 2.50L13.30 0.23L0.43 13.10L2.70 15.37Z" fill="url(#gred)" stroke="#e0282e" stroke-width=".5" stroke-linejoin="round"/></svg>
<svg style="left:847px;top:423px;overflow:visible" width="16" height="16" viewBox="0 0 16 16"><path d="M0.5 0.5H9.5L12.5 3.5V15.5H0.5Z" fill="#fcfcfc" stroke="#969696"/><path d="M9.5 0.5V3.5H12.5" fill="#ececec" stroke="#969696" stroke-width=".8"/><path d="M5.4 12A3.6 3.6 0 1 1 10.1 9.5" fill="none" stroke="#36c024" stroke-width="2"/><path d="M7 9.6L12.4 10.2 9.5 13.4Z" fill="#22b014"/></svg>
<div style="left:845px;top:443px;width:342px;height:1px;background:#e9e9e9"></div>
<svg style="left:846px;top:448px;overflow:visible" width="13" height="16" viewBox="0 0 13 16"><rect x="0" y="0" width="13" height="16" fill="url(#ghelp)"/><rect x="0" y="0" width="2.7" height="16" fill="#21409e"/><rect x="0.25" y="0.25" width="12.5" height="15.5" fill="none" stroke="#1a2c84" stroke-width=".5"/><text transform="translate(8,14.2) scale(.72,1)" font-family="Liberation Sans,sans-serif" font-size="16" font-weight="700" fill="#1a2a78" text-anchor="middle">?</text><text transform="translate(7.4,13.7) scale(.72,1)" font-family="Liberation Sans,sans-serif" font-size="16" font-weight="700" fill="#fff" text-anchor="middle">?</text></svg>
<svg style="left:1179px;top:450.5px" width="6" height="10" viewBox="0 0 6 10"><path d="M0 0L5.5 5L0 10Z" fill="#000"/></svg>
<div style="left:840px;top:473px;width:352px;height:25px;background:linear-gradient(#c1d6ec,#9cb8d9)"></div>
<svg style="left:1176px;top:483px" width="10" height="5" viewBox="0 0 10 5"><path d="M0 5L5 0L10 5Z" fill="#000"/></svg>
<svg style="left:845px;top:502px;overflow:visible" width="16" height="16" viewBox="0 0 16 16"><rect x="0.6" y="0.4" width="14.2" height="15" rx="1.6" fill="#f1f5fa" stroke="#70747e" stroke-width="1.1"/><path d="M2 2.2H12.6" stroke="#d3dbe7" stroke-width="1"/><path d="M12.8 0.8L14.2 2.2" stroke="#4f74a8" stroke-width=".9"/><path d="M2.5 4.6H6.2V5.9H13V13.3H2.5Z" fill="#fbfcfe" stroke="#9a9ec0" stroke-width=".9"/><rect x="7.2" y="4.3" width="2.1" height="1.1" rx=".4" fill="#fff" stroke="#c4c8dc" stroke-width=".4"/><rect x="10.1" y="4.3" width="2.1" height="1.1" rx=".4" fill="#fff" stroke="#c4c8dc" stroke-width=".4"/><path d="M5.6 8.3H10.8M5.6 10.5H10.8" stroke="#9a9ea8" stroke-width=".9"/><circle cx="4.1" cy="8.3" r=".65" fill="#10a8f4"/><circle cx="4.1" cy="10.5" r=".55" fill="#8a8e98"/><rect x="6" y="13.7" width="3.1" height="1.4" fill="#14b0f4"/><rect x="10.3" y="13.9" width="2.7" height="1" fill="#b4b4b4"/></svg>
<svg style="left:845.5px;top:526px;overflow:visible" width="16" height="16" viewBox="0 0 16 16"><rect x="2.2" y="0.5" width="12.6" height="15" fill="#f5f5f5" stroke="#8c8c8c"/><path d="M3 0.7H15.2" stroke="#8f4a28" stroke-width="1.5"/><path d="M14.9 0.7V4.5" stroke="#9a5a3a" stroke-width=".8"/><path d="M2.7 14.2H14.3" stroke="#c4c4c4" stroke-width="1"/><path d="M2 15.5H15" stroke="#777" stroke-width=".8"/><circle cx="8.1" cy="7.6" r="4" fill="#eef7fa" stroke="#7d868f" stroke-width="1.1"/><path d="M8.1 7.6V4.1A3.5 3.5 0 0 1 11.6 7.6Z" fill="#f2d668"/><path d="M8.1 5V7.6H10.4" stroke="#30404e" stroke-width=".9" fill="none"/><path d="M2.8 -0.4L3.3 1.9L5.3 0.6L4.0 2.6L6.3 3.1L4.0 3.6L5.3 5.6L3.3 4.3L2.8 6.6L2.3 4.3L0.3 5.6L1.6 3.6L-0.7 3.1L1.6 2.6L0.3 0.6L2.3 1.9Z" fill="#f7a51e" stroke="#f09000" stroke-width=".2"/><circle cx="2.8" cy="3.1" r="1.2" fill="#fbc040"/></svg>
<svg style="left:845px;top:550px;overflow:visible" width="16" height="16" viewBox="0 0 16 16"><path d="M0.5 0.5H6L8.5 3V11.5H0.5Z" fill="#fff" stroke="#a8a8a8" stroke-width=".9"/><path d="M2 4.4H6M2 6.4H7M2 8.4H7" stroke="#4a84d8" stroke-width=".8"/><path d="M6.5 4.5H12.5L15.5 7.5V15.5H6.5Z" fill="#fff" stroke="#9a9a9a" stroke-width=".9"/><path d="M12.5 4.5V7.5H15.5" fill="#eee" stroke="#9a9a9a" stroke-width=".8"/><path d="M8 9.4H14M8 11.4H14M8 13.4H14" stroke="#4a84d8" stroke-width=".8"/></svg>
<svg style="left:1179px;top:552.5px" width="6" height="10" viewBox="0 0 6 10"><path d="M0 0L5.5 5L0 10Z" fill="#000"/></svg>
<svg style="left:846px;top:574px;overflow:visible" width="16" height="16" viewBox="0 0 16 16"><path d="M0.6 0.5H13.4V14.6H2.3L0.6 12.9Z" fill="#3e3e3e" stroke="#1c1c1c" stroke-width=".7"/><rect x="1.9" y="0.9" width="10.2" height="9.1" fill="#f9f9f9"/><rect x="1.9" y="0.9" width="10.2" height="1.1" fill="#dedede"/><rect x="3.4" y="11" width="7.4" height="3.7" fill="#d4d4d4"/><rect x="4.3" y="11.5" width="2.2" height="2.8" fill="#2e2e2e"/><rect x="8.6" y="11" width="2.2" height="3.7" fill="#f2f2f2"/></svg>
<div style="left:845px;top:594px;width:342px;height:1px;background:#e9e9e9"></div>
<svg style="left:847px;top:599px;overflow:visible" width="16" height="16" viewBox="0 0 16 16"><path d="M0.5 0.5H9.5L12.5 3.5V15.5H0.5Z" fill="#fcfcfc" stroke="#969696"/><path d="M9.5 0.5V3.5H12.5" fill="#ececec" stroke="#969696" stroke-width=".8"/><path d="M5.4 12A3.6 3.6 0 1 1 10.1 9.5" fill="none" stroke="#36c024" stroke-width="2"/><path d="M7 9.6L12.4 10.2 9.5 13.4Z" fill="#22b014"/></svg>
<div style="left:845px;top:619px;width:342px;height:1px;background:#e9e9e9"></div>
<svg style="left:846px;top:624px;overflow:visible" width="13" height="16" viewBox="0 0 13 16"><rect x="0" y="0" width="13" height="16" fill="url(#ghelp)"/><rect x="0" y="0" width="2.7" height="16" fill="#21409e"/><rect x="0.25" y="0.25" width="12.5" height="15.5" fill="none" stroke="#1a2c84" stroke-width=".5"/><text transform="translate(8,14.2) scale(.72,1)" font-family="Liberation Sans,sans-serif" font-size="16" font-weight="700" fill="#1a2a78" text-anchor="middle">?</text><text transform="translate(7.4,13.7) scale(.72,1)" font-family="Liberation Sans,sans-serif" font-size="16" font-weight="700" fill="#fff" text-anchor="middle">?</text></svg>
<svg style="left:1179px;top:626.5px" width="6" height="10" viewBox="0 0 6 10"><path d="M0 0L5.5 5L0 10Z" fill="#000"/></svg>
<div style="left:0px;top:748px;width:1193px;height:22px;background:#f0f0f0"></div>
<div style="left:973px;top:750px;width:1px;height:19px;background:#d7d7d7"></div>
<div style="left:1106px;top:750px;width:1px;height:19px;background:#d7d7d7"></div>
<div style="left:1191px;top:750px;width:1px;height:19px;background:#d7d7d7"></div>
<span class="t" style="left:29.00px;top:3.64px;letter-spacing:-0.278px;">Ereignisanzeige</span>
<span class="t" style="left:10.00px;top:30.34px;letter-spacing:-0.254px;">Datei</span>
<span class="t" style="left:52.50px;top:30.34px;letter-spacing:0.328px;">Aktion</span>
<span class="t" style="left:103.50px;top:30.34px;letter-spacing:0.273px;">Ansicht</span>
<span class="t" style="left:159.50px;top:30.34px;">?</span>
<span class="t" style="left:26.00px;top:82.44px;letter-spacing:-0.259px;">Ereignisanzeige (Lokal)</span>
<span class="t" style="left:44.70px;top:100.44px;letter-spacing:-0.030px;">Benutzerdefinierte</span>
<span class="t" style="left:143.50px;top:100.44px;letter-spacing:0.396px;width:51.5px;overflow:hidden;">Ansichten</span>
<span class="t" style="left:64.30px;top:118.44px;letter-spacing:0.065px;">Administrative</span>
<span class="t" style="left:143.90px;top:118.44px;letter-spacing:-0.526px;width:51.099999999999994px;overflow:hidden;">Ereignisse</span>
<span class="t" style="left:64.00px;top:136.44px;letter-spacing:-0.448px;">Ereignisse</span>
<span class="t" style="left:119.20px;top:136.44px;letter-spacing:-0.222px;">der</span>
<span class="t" style="left:138.50px;top:136.44px;letter-spacing:0.009px;width:56.5px;overflow:hidden;">Zusammenfassungsseite</span>
<span class="t" style="left:44.60px;top:154.44px;letter-spacing:0.168px;">Windows-Protokolle</span>
<span class="t" style="left:44.60px;top:172.44px;letter-spacing:0.161px;">Anwendungs-</span>
<span class="t" style="left:123.10px;top:172.44px;letter-spacing:0.684px;">und</span>
<span class="t" style="left:147.50px;top:172.44px;letter-spacing:-0.112px;width:47.5px;overflow:hidden;">Dienstprotokolle</span>
<span class="t" style="left:44.60px;top:190.44px;letter-spacing:0.184px;">Abonnements</span>
<span class="t" style="left:207.00px;top:82.64px;letter-spacing:-0.404px;font-weight:700;color:#fff;">Ereignisse der Zusammenfassungsseite</span>
<span class="t" style="left:436.70px;top:82.64px;letter-spacing:-0.225px;color:#fff;">Anzahl von Ereignissen: 12</span>
<span class="t" style="left:238.80px;top:111.74px;letter-spacing:-0.230px;">Anzahl von Ereignissen: 12</span>
<span class="t" style="left:210.80px;top:142.44px;letter-spacing:-0.501px;">Ebene</span>
<span class="t" style="left:346.00px;top:142.44px;letter-spacing:0.016px;">Datum und Uhrzeit</span>
<span class="t" style="left:530.50px;top:142.44px;letter-spacing:0.122px;">Quelle</span>
<span class="t" style="left:652.00px;top:142.44px;letter-spacing:-0.226px;">Ereignis-ID</span>
<span class="t" style="left:720.50px;top:142.44px;letter-spacing:-0.006px;">Aufgabenkate...</span>
<span class="t" style="left:227.00px;top:164.34px;letter-spacing:0.125px;">Warnung</span>
<span class="t" style="left:345.80px;top:164.34px;letter-spacing:-0.562px;">25.02.2021 21:22:05</span>
<span class="t" style="left:531.00px;top:164.34px;letter-spacing:-0.108px;">WHEA-Logger</span>
<span class="t" style="left:697.10px;top:164.34px;letter-spacing:-1.359px;">19</span>
<span class="t" style="left:720.50px;top:164.34px;letter-spacing:-0.176px;">Keine</span>
<span class="t" style="left:227.00px;top:183.34px;letter-spacing:0.125px;">Warnung</span>
<span class="t" style="left:345.80px;top:183.34px;letter-spacing:-0.562px;">25.02.2021 00:28:07</span>
<span class="t" style="left:531.00px;top:183.34px;letter-spacing:-0.108px;">WHEA-Logger</span>
<span class="t" style="left:697.10px;top:183.34px;letter-spacing:-1.359px;">19</span>
<span class="t" style="left:720.50px;top:183.34px;letter-spacing:-0.176px;">Keine</span>
<span class="t" style="left:227.00px;top:202.34px;letter-spacing:0.125px;">Warnung</span>
<span class="t" style="left:345.80px;top:202.34px;letter-spacing:-0.562px;">25.02.2021 00:01:08</span>
<span class="t" style="left:531.00px;top:202.34px;letter-spacing:-0.108px;">WHEA-Logger</span>
<span class="t" style="left:697.10px;top:202.34px;letter-spacing:-1.359px;">19</span>
<span class="t" style="left:720.50px;top:202.34px;letter-spacing:-0.176px;">Keine</span>
<span class="t" style="left:227.00px;top:221.34px;letter-spacing:0.125px;">Warnung</span>
<span class="t" style="left:345.80px;top:221.34px;letter-spacing:-0.562px;">24.02.2021 23:59:26</span>
<span class="t" style="left:531.00px;top:221.34px;letter-spacing:-0.108px;">WHEA-Logger</span>
<span class="t" style="left:697.10px;top:221.34px;letter-spacing:-1.359px;">19</span>
<span class="t" style="left:720.50px;top:221.34px;letter-spacing:-0.176px;">Keine</span>
<span class="t" style="left:227.00px;top:240.34px;letter-spacing:0.125px;">Warnung</span>
<span class="t" style="left:345.80px;top:240.34px;letter-spacing:-0.562px;">24.02.2021 23:59:03</span>
<span class="t" style="left:531.00px;top:240.34px;letter-spacing:-0.108px;">WHEA-Logger</span>
<span class="t" style="left:697.10px;top:240.34px;letter-spacing:-1.359px;">19</span>
<span class="t" style="left:720.50px;top:240.34px;letter-spacing:-0.176px;">Keine</span>
<span class="t" style="left:227.00px;top:259.34px;letter-spacing:0.125px;">Warnung</span>
<span class="t" style="left:345.80px;top:259.34px;letter-spacing:-0.562px;">24.02.2021 23:46:17</span>
<span class="t" style="left:531.00px;top:259.34px;letter-spacing:-0.108px;">WHEA-Logger</span>
<span class="t" style="left:697.10px;top:259.34px;letter-spacing:-1.359px;">19</span>
<span class="t" style="left:720.50px;top:259.34px;letter-spacing:-0.176px;">Keine</span>
<span class="t" style="left:227.00px;top:278.34px;letter-spacing:0.125px;">Warnung</span>
<span class="t" style="left:345.80px;top:278.34px;letter-spacing:-0.562px;">24.02.2021 18:45:52</span>
<span class="t" style="left:531.00px;top:278.34px;letter-spacing:-0.108px;">WHEA-Logger</span>
<span class="t" style="left:697.10px;top:278.34px;letter-spacing:-1.359px;">19</span>
<span class="t" style="left:720.50px;top:278.34px;letter-spacing:-0.176px;">Keine</span>
<span class="t" style="left:227.00px;top:297.34px;letter-spacing:0.125px;">Warnung</span>
<span class="t" style="left:345.80px;top:297.34px;letter-spacing:-0.562px;">24.02.2021 18:45:32</span>
<span class="t" style="left:531.00px;top:297.34px;letter-spacing:-0.108px;">WHEA-Logger</span>
<span class="t" style="left:697.10px;top:297.34px;letter-spacing:-1.359px;">19</span>
<span class="t" style="left:720.50px;top:297.34px;letter-spacing:-0.176px;">Keine</span>
<span class="t" style="left:227.00px;top:316.34px;letter-spacing:0.125px;">Warnung</span>
<span class="t" style="left:345.80px;top:316.34px;letter-spacing:-0.562px;">24.02.2021 18:43:01</span>
<span class="t" style="left:531.00px;top:316.34px;letter-spacing:-0.108px;">WHEA-Logger</span>
<span class="t" style="left:697.10px;top:316.34px;letter-spacing:-1.359px;">19</span>
<span class="t" style="left:720.50px;top:316.34px;letter-spacing:-0.176px;">Keine</span>
<span class="t" style="left:227.00px;top:335.34px;letter-spacing:0.125px;">Warnung</span>
<span class="t" style="left:345.80px;top:335.34px;letter-spacing:-0.562px;">24.02.2021 18:39:37</span>
<span class="t" style="left:531.00px;top:335.34px;letter-spacing:-0.108px;">WHEA-Logger</span>
<span class="t" style="left:697.10px;top:335.34px;letter-spacing:-1.359px;">19</span>
<span class="t" style="left:720.50px;top:335.34px;letter-spacing:-0.176px;">Keine</span>
<span class="t" style="left:227.00px;top:354.34px;letter-spacing:0.125px;">Warnung</span>
<span class="t" style="left:345.80px;top:354.34px;letter-spacing:-0.562px;">24.02.2021 18:38:26</span>
<span class="t" style="left:531.00px;top:354.34px;letter-spacing:-0.108px;">WHEA-Logger</span>
<span class="t" style="left:697.10px;top:354.34px;letter-spacing:-1.359px;">19</span>
<span class="t" style="left:720.50px;top:354.34px;letter-spacing:-0.176px;">Keine</span>
<span class="t" style="left:227.00px;top:373.34px;letter-spacing:0.125px;">Warnung</span>
<span class="t" style="left:345.80px;top:373.34px;letter-spacing:-0.562px;">24.02.2021 18:32:21</span>
<span class="t" style="left:531.00px;top:373.34px;letter-spacing:-0.108px;">WHEA-Logger</span>
<span class="t" style="left:697.10px;top:373.34px;letter-spacing:-1.359px;">19</span>
<span class="t" style="left:720.50px;top:373.34px;letter-spacing:-0.176px;">Keine</span>
<span class="t" style="left:210.00px;top:401.44px;letter-spacing:-0.243px;">Ereignis 19, WHEA-Logger</span>
<span class="t" style="left:219.70px;top:430.44px;letter-spacing:0.175px;">Allgemein</span>
<span class="t" style="left:285.70px;top:432.34px;letter-spacing:-0.198px;">Details</span>
<span class="t" style="left:230.00px;top:469.44px;letter-spacing:-0.115px;">Behobener Hardwarefehler.</span>
<span class="t" style="left:230.00px;top:499.44px;letter-spacing:-0.139px;">Gemeldet von Komponente: Prozessorkern</span>
<span class="t" style="left:230.00px;top:514.44px;letter-spacing:-0.170px;">Fehlerquelle: Unknown Error Source</span>
<span class="t" style="left:224.50px;top:546.44px;letter-spacing:0.073px;">Protokollname:</span>
<span class="t" style="left:357.10px;top:546.44px;letter-spacing:-0.463px;">System</span>
<span class="t" style="left:224.50px;top:570.44px;letter-spacing:-0.089px;">Quelle:</span>
<span class="t" style="left:357.10px;top:570.44px;letter-spacing:-0.148px;">WHEA-Logger</span>
<span class="t" style="left:224.50px;top:594.44px;letter-spacing:-0.244px;">Ereignis-ID:</span>
<span class="t" style="left:357.10px;top:594.44px;letter-spacing:-0.959px;">19</span>
<span class="t" style="left:224.50px;top:618.44px;letter-spacing:-0.509px;">Ebene:</span>
<span class="t" style="left:357.10px;top:618.44px;letter-spacing:0.075px;">Warnung</span>
<span class="t" style="left:224.50px;top:642.44px;letter-spacing:-0.259px;">Benutzer:</span>
<span class="t" style="left:357.10px;top:642.44px;letter-spacing:-0.201px;">Lokaler Dienst</span>
<span class="t" style="left:224.50px;top:666.44px;letter-spacing:-0.172px;">Vorgangscode:</span>
<span class="t" style="left:357.10px;top:666.44px;letter-spacing:0.361px;">Info</span>
<span class="t" style="left:224.50px;top:690.44px;letter-spacing:0.063px;">Weitere Informationen:</span>
<span class="t" style="left:359.80px;top:690.44px;letter-spacing:0.200px;color:#0000ff;text-decoration:underline;">Onlinehilfe</span>
<span class="t" style="left:514.50px;top:570.44px;letter-spacing:0.100px;">Protokolliert:</span>
<span class="t" style="left:628.50px;top:570.44px;letter-spacing:-0.562px;">25.02.2021 21:22:05</span>
<span class="t" style="left:514.50px;top:594.44px;letter-spacing:0.053px;">Aufgabenkategorie:</span>
<span class="t" style="left:628.50px;top:594.44px;letter-spacing:-0.176px;">Keine</span>
<span class="t" style="left:514.50px;top:618.44px;letter-spacing:-0.135px;">Schlüsselwörter:</span>
<span class="t" style="left:514.50px;top:642.44px;letter-spacing:0.246px;">Computer:</span>
<span class="t" style="left:628.50px;top:642.44px;letter-spacing:0.089px;">Dagobert</span>
<span class="t" style="left:844.50px;top:84.44px;letter-spacing:0.094px;font-weight:700;">Aktionen</span>
<span class="t" style="left:846.90px;top:108.34px;letter-spacing:-0.232px;">Ereignisse der Zusammenfassungsseite</span>
<span class="t" style="left:871.10px;top:132.34px;letter-spacing:-0.042px;">Gespeicherte Protokolldatei öffnen...</span>
<span class="t" style="left:871.10px;top:156.34px;letter-spacing:-0.085px;">Benutzerdefinierte Ansicht erstellen...</span>
<span class="t" style="left:871.10px;top:180.34px;letter-spacing:0.015px;">Benutzerdefinierte Ansicht importieren...</span>
<span class="t" style="left:871.10px;top:205.34px;letter-spacing:0.025px;">Aktuelle benutzerdefinierte Ansicht filtern...</span>
<span class="t" style="left:871.10px;top:229.34px;letter-spacing:-0.180px;">Eigenschaften</span>
<span class="t" style="left:871.10px;top:253.34px;letter-spacing:-0.363px;">Suchen...</span>
<span class="t" style="left:871.10px;top:277.34px;letter-spacing:-0.106px;">Alle Ereignisse in der benutzerdefinierten Ansicht speic...</span>
<span class="t" style="left:871.10px;top:301.34px;letter-spacing:-0.042px;">Benutzerdefinierte Ansicht exportieren...</span>
<span class="t" style="left:871.10px;top:325.34px;letter-spacing:-0.049px;">Benutzerdefinierte Ansicht kopieren...</span>
<span class="t" style="left:871.10px;top:349.34px;letter-spacing:-0.046px;">Aufgabe an diese benutzerdefinierte Ansicht anfügen...</span>
<span class="t" style="left:871.10px;top:374.34px;letter-spacing:0.107px;">Ansicht</span>
<span class="t" style="left:871.10px;top:399.34px;letter-spacing:-0.246px;">Löschen</span>
<span class="t" style="left:871.10px;top:423.34px;letter-spacing:-0.067px;">Aktualisieren</span>
<span class="t" style="left:871.10px;top:448.34px;letter-spacing:0.396px;">Hilfe</span>
<span class="t" style="left:846.90px;top:478.34px;letter-spacing:-0.273px;">Ereignis 19, WHEA-Logger</span>
<span class="t" style="left:871.10px;top:502.34px;letter-spacing:-0.149px;">Ereigniseigenschaften</span>
<span class="t" style="left:871.10px;top:526.34px;letter-spacing:-0.186px;">Aufgabe an dieses Ereignis anfügen...</span>
<span class="t" style="left:871.10px;top:550.34px;letter-spacing:-0.164px;">Kopieren</span>
<span class="t" style="left:871.10px;top:574.34px;letter-spacing:-0.207px;">Ausgewählte Ereignisse speichern...</span>
<span class="t" style="left:871.10px;top:599.34px;letter-spacing:-0.067px;">Aktualisieren</span>
<span class="t" style="left:871.10px;top:624.34px;letter-spacing:0.396px;">Hilfe</span>
</div>
</body></html>
